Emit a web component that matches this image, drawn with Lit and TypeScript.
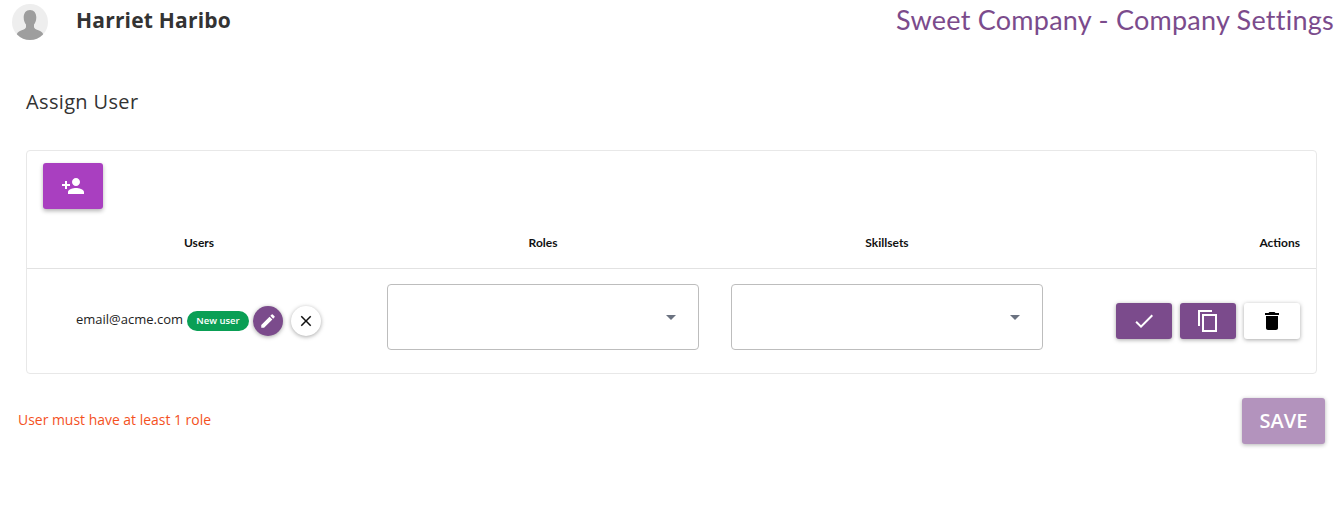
import { LitElement, html, css } from "lit";
import { customElement } from "lit/decorators.js";

@customElement("app-root")
export class AppRoot extends LitElement {
  static styles = css`
    :host { display: block; height: 517px; background: #fff; font-family: "Open Sans", sans-serif; color: #333; overflow: hidden; }
    svg { display: block; }
    .top { display: flex; align-items: center; height: 42px; padding: 0 8px 0 12px; }
    .avatar { width: 36px; height: 36px; border-radius: 50%; background: #eee; overflow: hidden; margin-top: 2px; flex: none; }
    .name { margin: -2px 0 0 28px; font-size: 21px; line-height: 28px; font-weight: 700; letter-spacing: 0.2px; color: #333; }
    .title { margin: -2px 0 0 auto; font-family: "Lato", sans-serif; font-size: 27px; line-height: 36px; font-weight: 400; letter-spacing: 0.25px; color: #7b4b8c; }
    h2 { margin: 47px 0 0 26px; font-size: 20px; line-height: 26px; font-weight: 400; letter-spacing: 0.35px; color: #333; }
    .card { margin: 35px 25px 0 26px; border: 1px solid #e8e8e8; border-radius: 4px; height: 222px; }
    .add { display: flex; align-items: center; justify-content: center; width: 60px; height: 46px; margin: 12px 0 0 16px; background: #a93fc0; border: 0; border-radius: 3px; box-shadow: 0 2px 4px rgba(0,0,0,.3); padding: 0; }
    .grid { display: grid; grid-template-columns: 344px 344px 344px 1fr; }
    .head { box-sizing: border-box; align-items: center; height: 60px; padding-top: 8px; border-bottom: 1px solid #e2e2e2; font-family: "Lato", sans-serif; font-size: 12px; font-weight: 700; color: #111; text-align: center; }
    .head .last { text-align: right; padding-right: 16px; }
    .row { align-items: center; height: 104px; }
    .user { display: flex; align-items: center; justify-content: flex-end; padding-right: 50px; gap: 4px; }
    .email { font-size: 13px; color: #222; margin-top: -4px; }
    .badge { background: #0a9f55; color: #fff; font-size: 9.5px; font-weight: 600; height: 20px; line-height: 20px; width: 62px; text-align: center; border-radius: 10px; }
    .round { display: flex; align-items: center; justify-content: center; width: 30px; height: 30px; border-radius: 50%; box-shadow: 0 1px 4px rgba(0,0,0,.35); }
    .round.edit { background: #7b4b8c; }
    .round.close { background: #fff; margin-left: 4px; }
    .selectcell { align-self: start; padding: 15px 16px 0; }
    .select { display: flex; align-items: center; justify-content: flex-end; height: 64px; border: 1px solid #bdbdbd; border-radius: 4px; padding-right: 22px; }
    .caret { width: 0; height: 0; border-left: 5px solid transparent; border-right: 5px solid transparent; border-top: 5px solid #6b7280; }
    .actions { display: flex; justify-content: flex-end; gap: 8px; padding-right: 16px; }
    .btn { display: flex; align-items: center; justify-content: center; width: 56px; height: 36px; border-radius: 3px; box-shadow: 0 1px 4px rgba(0,0,0,.35); background: #7b4b8c; }
    .btn.white { background: #fff; }
    .foot { display: flex; justify-content: space-between; align-items: flex-start; padding: 24px 17px 0 18px; }
    .err { font-size: 13.95px; line-height: 20px; color: #f4511e; margin-top: 12px; }
    .save { display: flex; align-items: center; justify-content: center; box-sizing: border-box; width: 83px; height: 46px; padding-bottom: 2px; background: #b393bd; color: #fff; font-size: 20px; font-weight: 600; border-radius: 3px; box-shadow: 0 1px 4px rgba(0,0,0,.3); }
  `;

  render() {
    return html`
      <div class="top">
        <div class="avatar">
          <svg width="36" height="36" viewBox="0 0 36 36"><path fill="#9e9e9e" d="M18 6c4 0 6.300 3 6.300 7.500 0 3-1 5.500-2.300 7v2.500c0 1.500 2 2.500 5 3.500 3 1 4.500 3 5 6.500v3.500H4v-3.500c.5-3.500 2-5.500 5-6.500 3-1 5-2 5-3.500v-2.500c-1.300-1.500-2.300-4-2.300-7C11.700 9 14 6 18 6z"/></svg>
        </div>
        <div class="name">Harriet Haribo</div>
        <div class="title">Sweet Company - Company Settings</div>
      </div>
      <h2>Assign User</h2>
      <div class="card">
        <button class="add" aria-label="Add user">
          <svg width="24" height="24" viewBox="0 0 24 24" fill="#fff"><path d="M15 12c2.210 0 4-1.790 4-4s-1.790-4-4-4-4 1.790-4 4 1.790 4 4 4zm-9-2V7H4v3H1v2h3v3h2v-3h3v-2H6zm9 4c-2.670 0-8 1.340-8 4v2h16v-2c0-2.660-5.330-4-8-4z"/></svg>
        </button>
        <div class="grid head">
          <div>Users</div><div>Roles</div><div>Skillsets</div><div class="last">Actions</div>
        </div>
        <div class="grid row">
          <div class="user">
            <span class="email">email@acme.com</span>
            <span class="badge">New user</span>
            <span class="round edit"><svg width="18" height="18" viewBox="0 0 24 24" fill="#fff"><path d="M3 17.250V21h3.750L17.810 9.940l-3.750-3.750L3 17.250zM20.710 7.040a1 1 0 0 0 0-1.410l-2.340-2.340a1 1 0 0 0-1.410 0l-1.830 1.830 3.750 3.750 1.830-1.830z"/></svg></span>
            <span class="round close"><svg width="18" height="18" viewBox="0 0 24 24" fill="#111"><path d="M19 6.410 17.590 5 12 10.590 6.410 5 5 6.410 10.590 12 5 17.590 6.410 19 12 13.410 17.590 19 19 17.590 13.410 12z"/></svg></span>
          </div>
          <div class="selectcell"><div class="select"><span class="caret"></span></div></div>
          <div class="selectcell"><div class="select"><span class="caret"></span></div></div>
          <div class="actions">
            <span class="btn"><svg width="24" height="24" viewBox="0 0 24 24" fill="#fff"><path d="M9 16.170 4.830 12l-1.420 1.410L9 19 21 7l-1.410-1.410z"/></svg></span>
            <span class="btn"><svg width="24" height="24" viewBox="0 0 24 24" fill="#fff"><path d="M16 1H2v16h2V3h12V1zm5 4H6v18h15V5zm-2 16H8V7h11v14z"/></svg></span>
            <span class="btn white"><svg width="24" height="24" viewBox="0 0 24 24" fill="#000"><path d="M6 19c0 1.100.9 2 2 2h8c1.100 0 2-.9 2-2V7H6v12zM19 4h-3.500l-1-1h-5l-1 1H5v2h14V4z"/></svg></span>
          </div>
        </div>
      </div>
      <div class="foot">
        <div class="err">User must have at least 1 role</div>
        <div class="save">SAVE</div>
      </div>
    `;
  }
}
